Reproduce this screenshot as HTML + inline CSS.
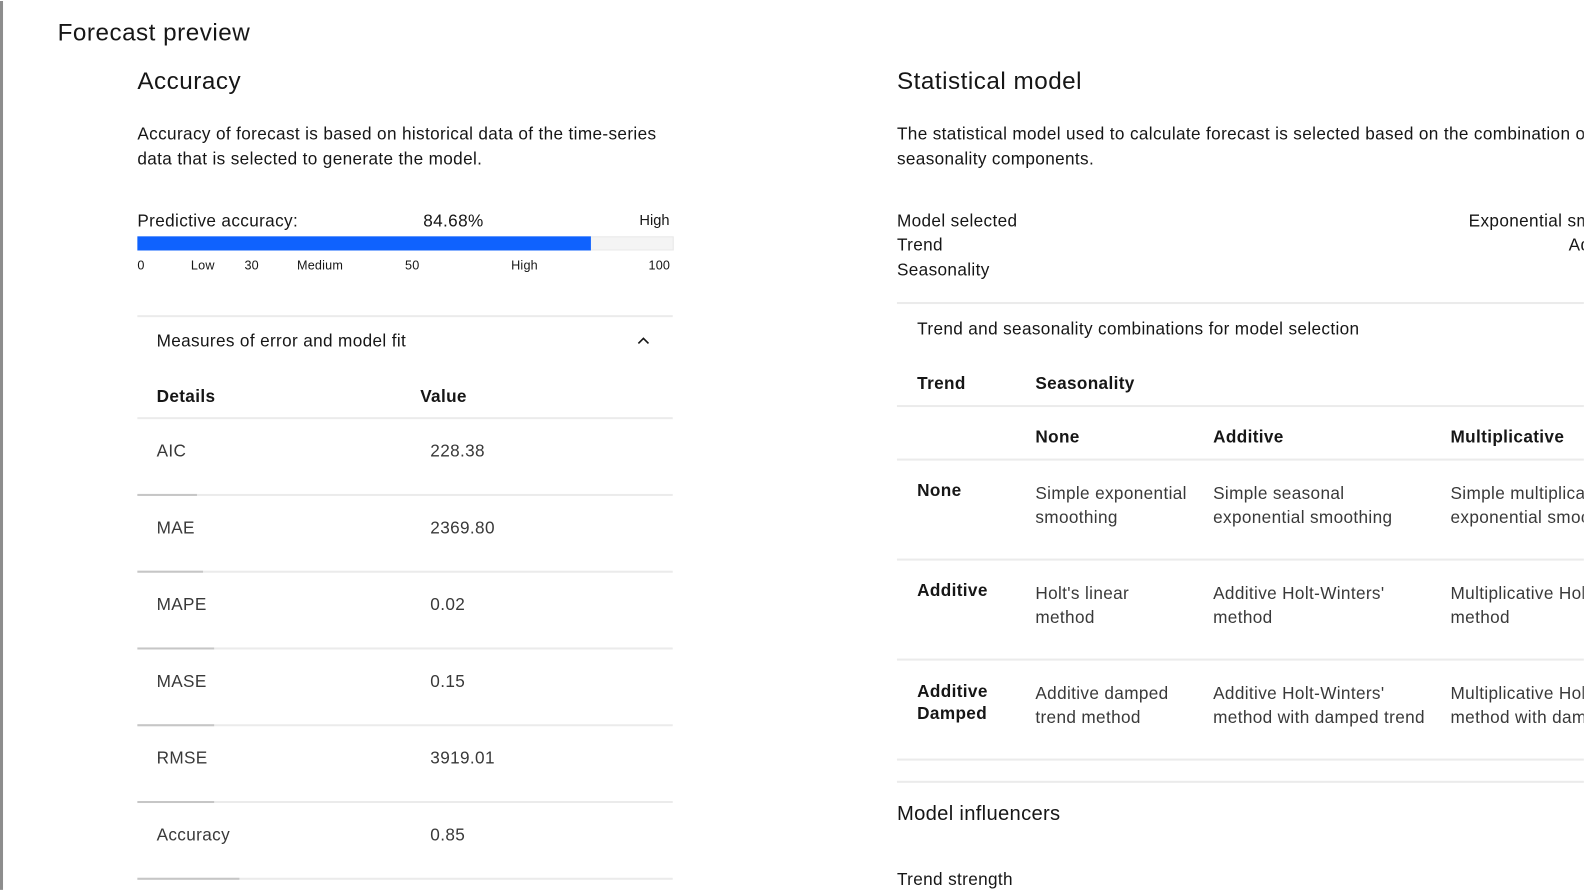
<!DOCTYPE html>
<html><head><meta charset="utf-8"><style>
*{margin:0;padding:0;box-sizing:border-box}
html,body{width:1584px;height:891px;overflow:hidden}
body{background:#fff;font-family:"Liberation Sans",sans-serif;color:#161616;position:relative}
#w{position:absolute;left:0;top:1px;width:1568px;height:880px;overflow:hidden;transform:scale(1.0101);transform-origin:0 0}
.a{position:absolute;white-space:nowrap}
.line{position:absolute;height:2px;background:#ebebeb}
.seg{position:absolute;height:2px;background:#c6c6c6}
.b{font-weight:bold}
.s16{font-size:17px;letter-spacing:0.35px}
.sm{font-size:12.5px;letter-spacing:0.2px}
</style></head><body><div id="w">
<div style="position:absolute;left:0;top:-2px;width:3px;height:891px;background:#8d8d8d"></div>
<div class="a" style="left:57px;top:18px;font-size:24px;letter-spacing:0.5px">Forecast preview</div>
<div class="a" style="left:136px;top:66px;font-size:24px;letter-spacing:0.5px">Accuracy</div>
<div class="a s16" style="left:136px;top:119px;line-height:25px">Accuracy of forecast is based on historical data of the time-series<br>data that is selected to generate the model.</div>
<div class="a s16" style="left:136px;top:208px">Predictive accuracy:</div>
<div class="a s16" style="left:419px;top:208px">84.68%</div>
<div class="a" style="left:633px;top:210px;font-size:14.5px">High</div>
<div style="position:absolute;left:136px;top:233px;width:531px;height:14px;background:#f4f4f4;border:1px solid #e8e8e8"></div>
<div style="position:absolute;left:136px;top:233px;width:449px;height:14px;background:#0f62fe"></div>
<div class="a sm" style="left:136px;top:255px">0</div>
<div class="a sm" style="left:189px;top:255px">Low</div>
<div class="a sm" style="left:242px;top:255px">30</div>
<div class="a sm" style="left:294px;top:255px">Medium</div>
<div class="a sm" style="left:401px;top:255px">50</div>
<div class="a sm" style="left:506px;top:255px">High</div>
<div class="a sm" style="left:642px;top:255px">100</div>
<div class="line" style="left:136px;top:311px;width:530px"></div>
<div class="a s16" style="left:155px;top:327px">Measures of error and model fit</div>
<svg style="position:absolute;left:630px;top:331px" width="14" height="10"><path d="M2 8 L7 3 L12 8" stroke="#161616" stroke-width="1.6" fill="none"/></svg>
<div class="a s16 b" style="left:155px;top:382px">Details</div>
<div class="a s16 b" style="left:416px;top:382px">Value</div>
<div class="line" style="left:136px;top:412px;width:530px"></div>

<div class="a s16" style="left:155px;top:436px;color:#393939">AIC</div><div class="a s16" style="left:426px;top:436px;color:#393939">228.38</div>
<div class="line" style="left:136px;top:488px;width:530px"></div><div class="seg" style="left:136px;top:488px;width:59px"></div>
<div class="a s16" style="left:155px;top:512px;color:#393939">MAE</div><div class="a s16" style="left:426px;top:512px;color:#393939">2369.80</div>
<div class="line" style="left:136px;top:564px;width:530px"></div><div class="seg" style="left:136px;top:564px;width:65px"></div>
<div class="a s16" style="left:155px;top:588px;color:#393939">MAPE</div><div class="a s16" style="left:426px;top:588px;color:#393939">0.02</div>
<div class="line" style="left:136px;top:640px;width:530px"></div><div class="seg" style="left:136px;top:640px;width:76px"></div>
<div class="a s16" style="left:155px;top:664px;color:#393939">MASE</div><div class="a s16" style="left:426px;top:664px;color:#393939">0.15</div>
<div class="line" style="left:136px;top:716px;width:530px"></div><div class="seg" style="left:136px;top:716px;width:76px"></div>
<div class="a s16" style="left:155px;top:740px;color:#393939">RMSE</div><div class="a s16" style="left:426px;top:740px;color:#393939">3919.01</div>
<div class="line" style="left:136px;top:792px;width:530px"></div><div class="seg" style="left:136px;top:792px;width:76px"></div>
<div class="a s16" style="left:155px;top:816px;color:#393939">Accuracy</div><div class="a s16" style="left:426px;top:816px;color:#393939">0.85</div>
<div class="line" style="left:136px;top:868px;width:530px"></div><div class="seg" style="left:136px;top:868px;width:101px"></div>

<div class="a" style="left:888px;top:66px;font-size:24px;letter-spacing:0.5px">Statistical model</div>
<div class="a s16" style="left:888px;top:119px;line-height:25px">The statistical model used to calculate forecast is selected based on the combination of trend and<br>seasonality components.</div>
<div class="a s16" style="left:888px;top:208px">Model selected</div>
<div class="a s16" style="left:888px;top:232px">Trend</div>
<div class="a s16" style="left:888px;top:257px">Seasonality</div>
<div class="a s16" style="left:1454px;top:208px">Exponential smoothing</div>
<div class="a s16" style="left:1553px;top:232px">Additive</div>
<div class="line" style="left:888px;top:298px;width:696px"></div>
<div class="a s16" style="left:908px;top:315px">Trend and seasonality combinations for model selection</div>
<div class="a s16 b" style="left:908px;top:369px">Trend</div>
<div class="a s16 b" style="left:1025px;top:369px">Seasonality</div>
<div class="line" style="left:888px;top:400px;width:696px"></div>
<div class="a s16 b" style="left:1025px;top:422px">None</div>
<div class="a s16 b" style="left:1201px;top:422px">Additive</div>
<div class="a s16 b" style="left:1436px;top:422px">Multiplicative</div>
<div class="line" style="left:888px;top:453px;width:696px"></div>
<div class="a s16 b" style="left:908px;top:475px">None</div>
<div class="a s16" style="left:1025px;top:476px;line-height:24px;color:#393939">Simple exponential<br>smoothing</div>
<div class="a s16" style="left:1201px;top:476px;line-height:24px;color:#393939">Simple seasonal<br>exponential smoothing</div>
<div class="a s16" style="left:1436px;top:476px;line-height:24px;color:#393939">Simple multiplicative<br>exponential smoothing</div>
<div class="line" style="left:888px;top:552px;width:696px"></div>
<div class="a s16 b" style="left:908px;top:574px">Additive</div>
<div class="a s16" style="left:1025px;top:575px;line-height:24px;color:#393939">Holt's linear<br>method</div>
<div class="a s16" style="left:1201px;top:575px;line-height:24px;color:#393939">Additive Holt-Winters'<br>method</div>
<div class="a s16" style="left:1436px;top:575px;line-height:24px;color:#393939">Multiplicative Holt-Winters'<br>method</div>
<div class="line" style="left:888px;top:651px;width:696px"></div>
<div class="a s16 b" style="left:908px;top:673px;line-height:22px">Additive<br>Damped</div>
<div class="a s16" style="left:1025px;top:674px;line-height:24px;color:#393939">Additive damped<br>trend method</div>
<div class="a s16" style="left:1201px;top:674px;line-height:24px;color:#393939">Additive Holt-Winters'<br>method with damped trend</div>
<div class="a s16" style="left:1436px;top:674px;line-height:24px;color:#393939">Multiplicative Holt-Winters'<br>method with damped trend</div>
<div class="line" style="left:888px;top:750px;width:696px"></div>
<div class="line" style="left:888px;top:772px;width:696px"></div>
<div class="a" style="left:888px;top:794px;font-size:20px;letter-spacing:0.3px">Model influencers</div>
<div class="a s16" style="left:888px;top:860px">Trend strength</div>
</div></body></html>
